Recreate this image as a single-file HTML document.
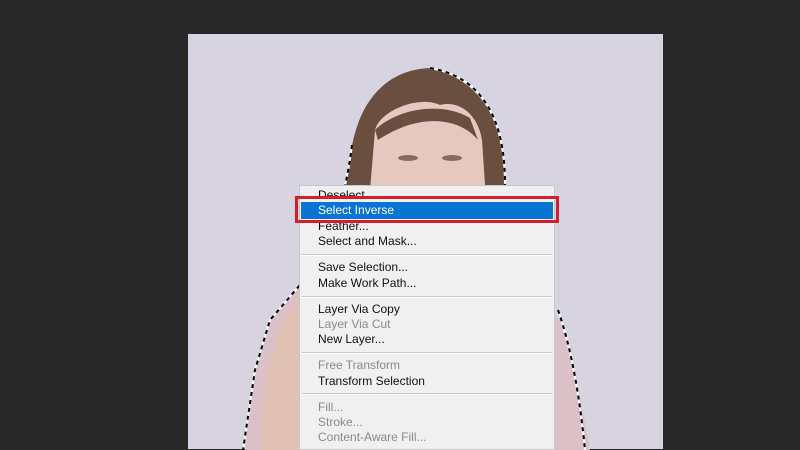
<!DOCTYPE html>
<html><head><style>
body{margin:0;width:800px;height:450px;background:#282828;position:relative;overflow:hidden;font-family:"Liberation Sans",Arial,sans-serif}
svg{position:absolute;left:0;top:0}
.menu{position:absolute;left:299px;top:185px;width:256px;height:265px;background:#f0f0f0;border:1px solid #c8c8c8;box-sizing:border-box}
.it{position:absolute;left:18px;font-size:12px;color:#111;line-height:15px;white-space:nowrap}
.d{color:#8a8a8a}
.sep{position:absolute;left:2px;right:2px;height:1px;background:#c8c8c8;border-bottom:1px solid #fff}
.hl{position:absolute;left:1px;right:1px;top:16px;height:17px;background:#0a74d4}
.red{position:absolute;left:295px;top:196px;width:258px;height:21px;border:3px solid #d41f2a}
</style></head><body>
<svg width="800" height="450">
<rect x="188" y="34" width="475" height="415" fill="#d8d3e1"/>
<path d="M300,285 L270,320 L255,370 L245,450 L590,450 L575,370 L560,320 L540,300 L300,285Z" fill="#dcc0c8"/>
<path d="M300,295 C275,330 262,380 260,450 L340,450 L330,330Z" fill="#e3c2b6"/>
<path d="M430,68 C380,70 355,110 350,160 C345,200 335,240 300,285 L330,290 L360,200 L500,200 L505,185 C505,150 500,85 430,68Z" fill="#6a4e40"/>
<path d="M375,130 C380,110 420,95 440,105 C460,100 478,115 482,140 L485,185 L370,190Z" fill="#e6c8c0"/>
<path d="M375,130 C395,110 440,100 470,118 L478,140 C460,118 420,112 378,140Z" fill="#6a4e40"/>
<ellipse cx="408" cy="158" rx="10" ry="3" fill="#8a6a60"/>
<ellipse cx="452" cy="158" rx="10" ry="3" fill="#8a6a60"/>
<path d="M430,68 C500,80 505,150 505,185 M352,145 C345,200 330,250 300,285 L270,320 L255,370 L243,450 M558,310 C572,350 580,400 585,450" fill="none" stroke="#fff" stroke-width="2"/>
<path d="M430,68 C500,80 505,150 505,185 M352,145 C345,200 330,250 300,285 L270,320 L255,370 L243,450 M558,310 C572,350 580,400 585,450" fill="none" stroke="#000" stroke-width="2" stroke-dasharray="4 4"/>
</svg>
<div class="menu">
<div class="hl"></div>
<div class="it" style="top:2px">Deselect</div>
<div class="it" style="top:17px;color:#fff">Select Inverse</div>
<div class="it" style="top:33px">Feather...</div>
<div class="it" style="top:48px">Select and Mask...</div>
<div class="sep" style="top:68px"></div>
<div class="it" style="top:74px">Save Selection...</div>
<div class="it" style="top:90px">Make Work Path...</div>
<div class="sep" style="top:110px"></div>
<div class="it" style="top:116px">Layer Via Copy</div>
<div class="it d" style="top:131px">Layer Via Cut</div>
<div class="it" style="top:146px">New Layer...</div>
<div class="sep" style="top:166px"></div>
<div class="it d" style="top:172px">Free Transform</div>
<div class="it" style="top:188px">Transform Selection</div>
<div class="sep" style="top:207px"></div>
<div class="it d" style="top:214px">Fill...</div>
<div class="it d" style="top:229px">Stroke...</div>
<div class="it d" style="top:244px">Content-Aware Fill...</div>
</div>
<div class="red"></div>
</body></html>
